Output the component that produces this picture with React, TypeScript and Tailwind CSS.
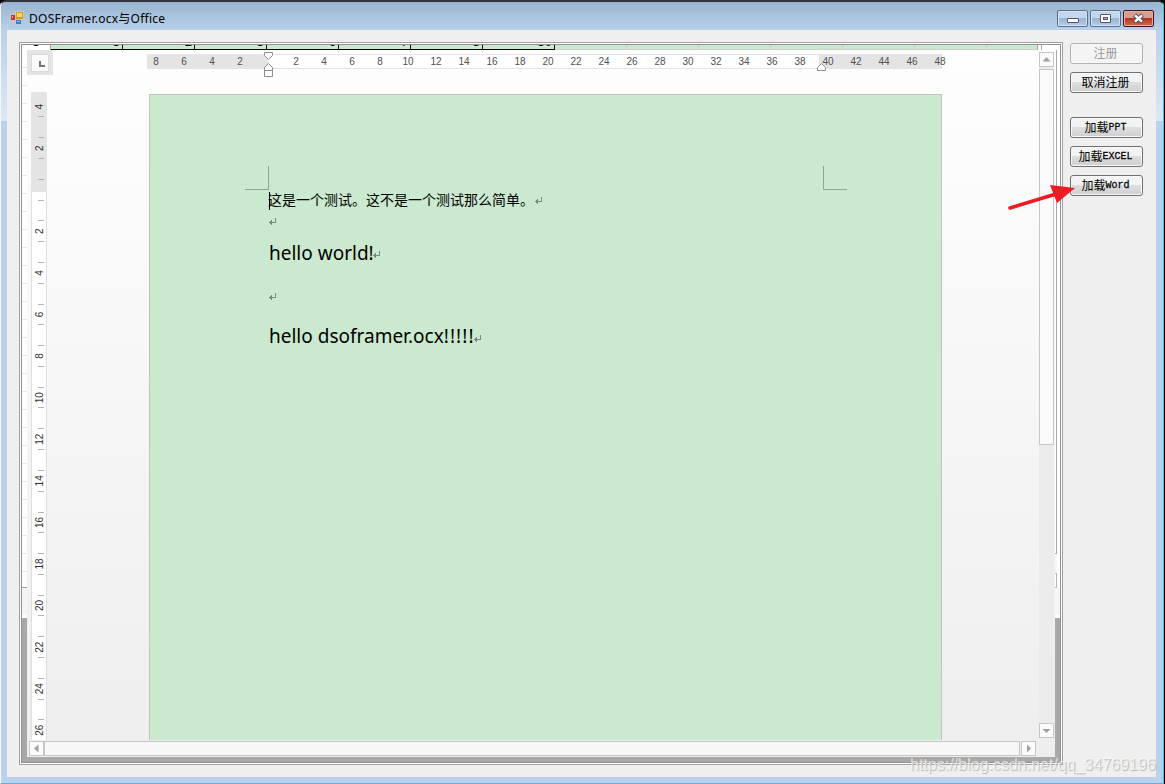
const topRuler = [8, 6, 4, 2, 0, 2, 4, 6, 8, 10, 12, 14, 16, 18, 20, 22, 24, 26, 28, 30, 32, 34, 36, 38, 40, 42, 44, 46, 48]
const sideRuler = [4, 2, 0, 2, 4, 6, 8, 10, 12, 14, 16, 18, 20, 22, 24, 26]
const sheetCells = ["3", "2", "3", "6", "7", "8", "30"]
const sheetRows = Array.from({ length: 29 }, (_, i) => i)

function ReturnMark() {
  return (
    <svg width="8" height="8" viewBox="0 0 8 8" className="mt-px shrink-0" shapeRendering="crispEdges">
      <path d="M6.5 0V5M7 4.5H0M1.5 3V6M2.5 2V7" fill="none" stroke="#7c897e" />
    </svg>
  )
}

function ScrollButton({ d }: { d: string }) {
  return (
    <div className="size-[15px] shrink-0 border border-[#c6c6c6] bg-[#fbfbfb]">
      <svg width="13" height="13" viewBox="0 0 13 13">
        <path d={d} fill="#a0a0a0" />
      </svg>
    </div>
  )
}

function SideButton({ label, latin, disabled }: { label: string; latin?: string; disabled?: boolean }) {
  return (
    <button
      disabled={disabled}
      className="flex h-[21px] w-[73px] items-center justify-center rounded-[3px] border border-[#707070] bg-linear-to-b from-[#f3f3f3] from-45% via-[#dedede] via-50% to-[#cfcfcf] pb-px pr-[2px] text-xs leading-none text-black shadow-[inset_0_0_0_1px_#f8f8f8] disabled:border-[#adb2b5] disabled:bg-none disabled:bg-[#f4f4f4] disabled:text-[#999]"
    >
      <span>{label}</span>
      {latin && <span className="mt-[2px] scale-y-115 font-['Liberation_Mono'] text-[10px] [-webkit-text-stroke:0.25px_#000]">{latin}</span>}
    </button>
  )
}

function TitleBar() {
  return (
    <div className="flex h-7 shrink-0 bg-linear-to-b from-[#99b4d1] to-[#b9d1ea] pl-[3px] pr-[3px]">
      <svg width="14" height="14" viewBox="0 0 14 14" className="mt-[9px]" shapeRendering="crispEdges">
        <path d="M0 3H5V0H14V9H12V13H5V13H0Z" fill="#c5c7cb" />
        <rect x="1" y="4" width="4" height="5" fill="#c83226" />
        <rect x="2" y="5" width="1" height="2" fill="#f3a494" />
        <rect x="6" y="1" width="7" height="7" fill="#d79a16" />
        <rect x="7" y="2" width="5" height="4" fill="#ffd758" />
        <rect x="6" y="9" width="5" height="4" fill="#3c79d4" />
        <rect x="7" y="10" width="3" height="1" fill="#8fbdf7" />
      </svg>
      <span className="ml-[5px] mt-[9px] grow whitespace-nowrap font-['Noto_Sans','Noto_Sans_CJK_SC',sans-serif] text-xs leading-4 tracking-[0.25px] text-black">
        DOSFramer.ocx与Office
      </span>
      <div className="mt-2 flex gap-[2px]">
        <div className="flex h-[17px] w-[31px] items-center justify-center rounded-[2px] border border-[#596f8b] bg-linear-to-b from-[#c3d6eb] from-45% via-[#9bb4d0] via-50% to-[#b4cce7] shadow-[inset_0_0_0_1px_#d3e2f3]">
          <div className="mt-1 h-[5px] w-[12px] rounded-[1px] border border-[#535666] bg-white" />
        </div>
        <div className="flex h-[17px] w-[31px] items-center justify-center rounded-[2px] border border-[#596f8b] bg-linear-to-b from-[#c3d6eb] from-45% via-[#9bb4d0] via-50% to-[#b4cce7] shadow-[inset_0_0_0_1px_#d3e2f3]">
          <div className="flex h-[9px] w-[11px] items-center justify-center rounded-[1px] border border-[#535666] bg-white">
            <div className="h-[3px] w-[5px] border border-[#535666] bg-[#a4bbd5]" />
          </div>
        </div>
        <div className="flex h-[17px] w-[31px] items-center justify-center rounded-[2px] border border-[#43141a] bg-linear-to-b from-[#dc9d91] from-45% via-[#b8321e] via-50% to-[#cf6a50] shadow-[inset_0_0_0_1px_#e6aea3]">
          <svg width="13" height="11" viewBox="0 0 13 11">
            <path d="M2.5 2L10.5 9M10.5 2L2.5 9" stroke="#535666" strokeWidth="4.4" />
            <path d="M3 2.4L10 8.6M10 2.4L3 8.6" stroke="#fff" strokeWidth="2.4" />
          </svg>
        </div>
      </div>
    </div>
  )
}

function TopRuler() {
  return (
    <div className="relative ml-[94px] mt-1 h-[15px] w-[795px] border-y border-[#e4e4e4] bg-[#e4e4e4]">
      <div className="ml-[121px] h-[13px] w-[551px] bg-white" />
      <div className="absolute -left-[5px] top-0 flex">
        {topRuler.map((n, i) => (
          <span key={i} className="w-7 text-center font-['Liberation_Sans'] text-[10px] leading-[13px] text-[#505050]">
            {n > 0 ? n : ""}
          </span>
        ))}
      </div>
      <svg className="absolute -top-[3px] left-[116px]" width="11" height="27" viewBox="0 0 11 27">
        <path d="M1.5 .5H9.5V3.5L5.5 7.5L1.5 3.5ZM1.5 18.5V15.5L5.5 11.5L9.5 15.5V18.5ZM1.5 18.5H9.5V24.5H1.5Z" fill="#fff" stroke="#8c8c8c" />
      </svg>
      <svg className="absolute left-[669px] top-[7px]" width="11" height="10" viewBox="0 0 11 10">
        <path d="M1.5 8.5V5.5L5.5 1.5L9.5 5.5V8.5Z" fill="#fff" stroke="#8c8c8c" />
      </svg>
    </div>
  )
}

function SideRuler() {
  return (
    <svg width="16" height="648" viewBox="0 0 16 648" className="ml-1 shrink-0">
      <rect width="16" height="648" fill="#fff" />
      <path d="M.5 0V648M15.5 0V648" stroke="#dedede" />
      <rect width="16" height="100" fill="#e4e4e4" />
      {sideRuler.map((n, i) => {
        const y = 14.6 + i * 41.58
        return (
          <g key={i}>
            {n > 0 && (
              <text
                transform={`translate(12.3 ${y}) rotate(-90)`}
                textAnchor="middle"
                fontFamily="Liberation Sans"
                fontSize="10"
                fill="#303030"
              >
                {n}
              </text>
            )}
            {i > 0 && <rect x="7" y={Math.round(y - 10.9)} width="6" height="1" fill="#b4b4b4" />}
            {i < 15 && <rect x="7" y={Math.round(y + 9.8)} width="6" height="1" fill="#b4b4b4" />}
          </g>
        )
      })}
    </svg>
  )
}

function Page() {
  return (
    <div className="relative ml-[102px] mt-[2px] h-[646px] w-[793px] border border-b-0 border-[#c0c4c0] bg-[#cae9ce] pl-[119px] pt-[95px] text-black">
      <svg className="absolute left-[95px] top-[71px]" width="603" height="25" viewBox="0 0 603 25">
        <path d="M0 23.5H23.5V0M578.5 0V23.5H602" fill="none" stroke="#8aa78d" />
      </svg>
      <div className="absolute left-[119px] top-[97px] h-[18px] w-px bg-black" />
      <div className="-mt-px flex h-[21px] items-center font-['Noto_Sans_CJK_SC',sans-serif] text-[14px]">
        <span className="-ml-px mr-px whitespace-nowrap">这是一个测试。这不是一个测试那么简单。</span>
        <div className="mt-px">
          <ReturnMark />
        </div>
      </div>
      <div className="flex h-[22px] items-center">
        <ReturnMark />
      </div>
      <div className="flex h-[42px] items-center font-['Noto_Sans',sans-serif] text-[19px]">
        <span>hello world!</span>
        <div className="-ml-px mt-[3px]">
          <ReturnMark />
        </div>
      </div>
      <div className="flex h-[44px] items-center">
        <ReturnMark />
      </div>
      <div className="flex h-[37px] items-center font-['Noto_Sans',sans-serif] text-[19px]">
        <span>hello dsoframer.ocx</span>
        <span className="tracking-[1.1px]">!!!!!</span>
        <div className="-ml-px mt-[3px]">
          <ReturnMark />
        </div>
      </div>
    </div>
  )
}

function WordView() {
  return (
    <div className="flex h-[707px] w-[1028px] flex-col bg-linear-to-b from-[#fefefe] to-[#eee]">
      <div className="flex h-[690px]">
        <div className="w-[1012px]">
          <div className="flex h-[42px]">
            <div className="flex h-[25px] w-[26px] shrink-0 items-center justify-center bg-[#e4e4e4]">
              <div className="flex size-[18px] items-center justify-center border border-[#dadada] bg-[#fbfbfb]">
                <div className="ml-[3px] mt-[3px] size-[6px] border-b-2 border-l-2 border-[#777]" />
              </div>
            </div>
            <TopRuler />
          </div>
          <div className="flex">
            <SideRuler />
            <Page />
          </div>
        </div>
        <div className="mt-[2px] flex h-[686px] w-[15px] flex-col bg-[#ebebeb]">
          <ScrollButton d="M6.5 4L10.5 8.5H2.5Z" />
          <div className="mt-[2px] h-[376px] border border-[#c6c6c6] bg-[#fafafa]" />
          <div className="grow" />
          <ScrollButton d="M6.5 9L10.5 5H2.5Z" />
        </div>
      </div>
      <div className="ml-[2px] mt-px flex">
        <ScrollButton d="M4 6.5L8.5 2.5V10.5Z" />
        <div className="h-[15px] w-[976px] border border-[#c6c6c6] bg-[#f7f7f7]" />
        <div className="ml-px">
          <ScrollButton d="M9 6.5L5 2.5V10.5Z" />
        </div>
      </div>
    </div>
  )
}

function SheetEdge() {
  return (
    <div className="flex h-[5px] overflow-hidden bg-white font-['Liberation_Sans'] text-[13px] text-black">
      <div className="w-[29px] border-r border-[#a0a0a0]">
        <div className="-mt-[10px] text-center leading-[14px]">3</div>
      </div>
      {sheetCells.map((c, i) => (
        <div key={i} className="h-[5px] w-[72px] overflow-hidden border-b border-r border-black bg-[#cae9ce]">
          <div className="-mt-[10px] pr-[2px] text-right leading-[14px]">{c}</div>
        </div>
      ))}
      <div className="flex w-[483px] border-b border-r border-[#a0a0a0] border-b-[#ccc] bg-[#cae9ce]">
        <div className="w-[72px] border-r border-[#ccc]" />
        <div className="w-[72px] border-r border-[#ccc]" />
        <div className="w-[72px] border-r border-[#ccc]" />
        <div className="w-[72px] border-r border-[#ccc]" />
        <div className="w-[72px] border-r border-[#ccc]" />
        <div className="w-[72px] border-r border-[#ccc]" />
      </div>
      <div className="w-[4px] border-r border-[#a0a0a0]" />
    </div>
  )
}

function Framer() {
  return (
    <div className="mt-3 h-[723px] w-[1044px] border border-[#a0a0a0] bg-white p-px">
      <div className="h-[719px] w-[1040px] overflow-hidden border border-[#919191] bg-[#a8a8a8]">
        <SheetEdge />
        <div className="flex">
          <div className="w-[5px]">
            {sheetRows.map((r) => (
              <div key={r} className="h-[18px] border-b border-[#e8e8e8] bg-white" />
            ))}
            <div className="h-[16px] border-b border-[#a0a0a0] bg-white" />
            <div className="h-[30px] border-b-[3px] border-white bg-[#f5f5f5]" />
          </div>
          <WordView />
          <div className="w-[5px]">
            <div className="h-[504px] bg-white">
              <div className="h-[504px] w-[2px] border-b border-r border-[#a8a8a8]" />
            </div>
            <div className="h-[19px] border-r-[3px] border-white bg-[#f5f5f5]" />
            <div className="h-[15px] bg-white">
              <div className="h-[15px] w-[2px] border-y border-r border-[#b8b8b8]" />
            </div>
            <div className="h-[30px] border-b-[3px] border-white bg-[#f5f5f5]" />
          </div>
        </div>
      </div>
    </div>
  )
}

export default function App() {
  return (
    <div className="relative h-[784px] w-[1165px] overflow-hidden bg-black font-['Noto_Sans_CJK_SC',sans-serif]">
      <div className="flex h-[784px] w-[1164px] flex-col rounded-t-[6px] border-b border-l border-r border-t-2 border-b-[#3cc3de] border-l-[#f4f8fc] border-r-[#3cc3de] border-t-[#30343a] bg-[#b9d1ea]">
        <div className="rounded-t-[5px] bg-linear-to-b from-[#99b4d1] to-[#b9d1ea] px-[6px]">
          <TitleBar />
        </div>
        <div className="flex">
          <div className="h-[91px] w-[6px] bg-linear-to-b from-[#b9d1ea] to-[#dce9f6]" />
          <div className="flex h-[747px] w-[1149px] bg-[#efefef] pl-3">
            <Framer />
            <div className="ml-[7px] flex flex-col pt-[13px]">
              <SideButton label="注册" disabled />
              <div className="h-[8px]" />
              <SideButton label="取消注册" />
              <div className="h-[24px]" />
              <SideButton label="加载" latin="PPT" />
              <div className="h-[8px]" />
              <SideButton label="加载" latin="EXCEL" />
              <div className="h-[8px]" />
              <SideButton label="加载" latin="Word" />
            </div>
          </div>
          <div className="h-[91px] w-[7px] bg-linear-to-b from-[#b9d1ea] to-[#dce9f6]" />
        </div>
      </div>

      <svg className="absolute left-[1004px] top-[180px]" width="72" height="34" viewBox="0 0 72 34">
        <path d="M6 28L52 14" stroke="#ed1c24" strokeWidth="3.6" strokeLinecap="round" />
        <path d="M46 5L71 8L53 23Z" fill="#ed1c24" />
      </svg>

      <div className="absolute left-[910px] top-[755px] whitespace-nowrap font-['Liberation_Sans'] text-[16px] leading-5 text-white/60 [text-shadow:1px_1px_1px_#b8b8b8]">
        https://blog.csdn.net/qq_34769196
      </div>
    </div>
  )
}
